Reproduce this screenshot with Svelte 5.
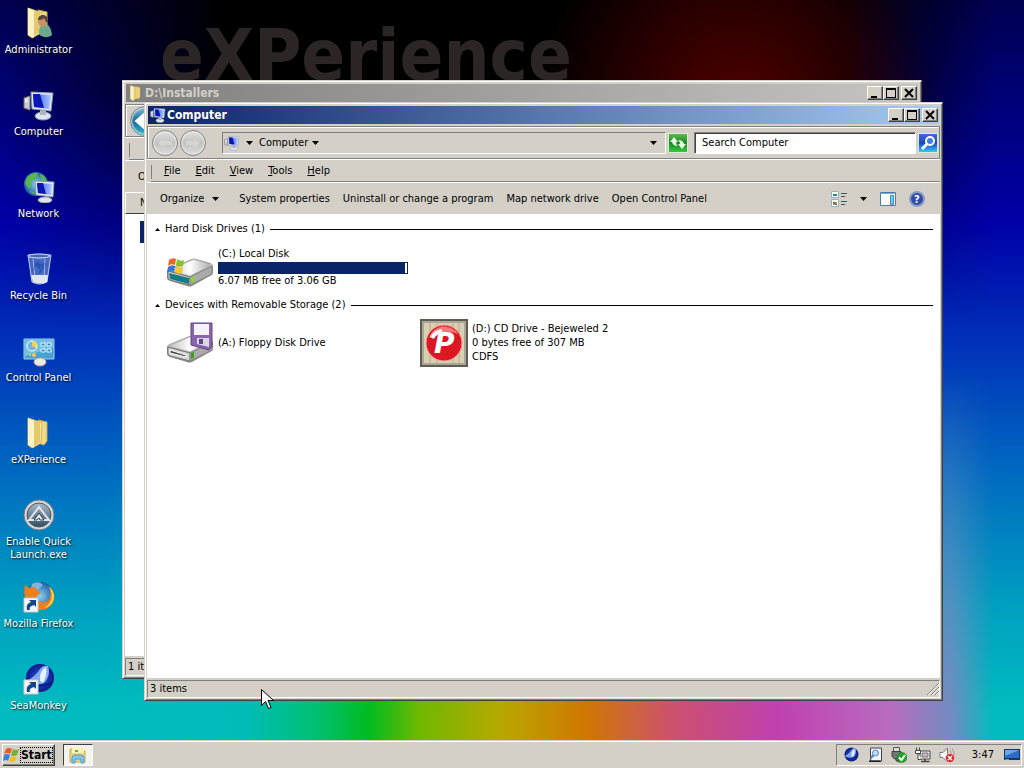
<script>
  const shortcuts = [
    { name: "Administrator", icon: "user" },
    { name: "Computer", icon: "computer" },
    { name: "Network", icon: "network" },
    { name: "Recycle Bin", icon: "bin" },
    { name: "Control Panel", icon: "control" },
    { name: "eXPerience", icon: "folder" },
    { name: "Enable Quick Launch.exe", icon: "autoit" },
    { name: "Mozilla Firefox", icon: "firefox", link: true },
    { name: "SeaMonkey", icon: "seamonkey", link: true },
  ];

  const menus = ["File", "Edit", "View", "Tools", "Help"];

  const commands = [
    "System properties",
    "Uninstall or change a program",
    "Map network drive",
    "Open Control Panel",
  ];

  const groups = [
    {
      title: "Hard Disk Drives (1)",
      drives: [
        {
          name: "(C:) Local Disk",
          icon: "disk",
          used: 99,
          lines: ["6.07 MB free of 3.06 GB"],
        },
      ],
    },
    {
      title: "Devices with Removable Storage (2)",
      drives: [
        { name: "(A:) Floppy Disk Drive", icon: "floppy", lines: [] },
        {
          name: "(D:) CD Drive - Bejeweled 2",
          icon: "game",
          lines: ["0 bytes free of 307 MB", "CDFS"],
        },
      ],
    },
  ];

  const tray = ["seamonkey", "search", "usb", "lan", "sound"];

  let query = $state("");
</script>

{#snippet monitor()}
  <path d="M1 9l6-2v14l-6-2z" fill="#c9cdd2" stroke="#777" />
  <path d="M2 11l3-1M2 13l3-1" stroke="#fff" />
  <ellipse cx="20" cy="27" rx="8" ry="4" fill="#dfe5ea" stroke="#8c97a5" />
  <path d="M17 21h6v5h-6z" fill="#aeb8c4" />
  <path d="M8 3l22 1-2 18-19-2z" fill="#dfe7f0" stroke="#8b98aa" />
  <path d="M10 5l18 1-2 14-15-2z" fill="url(#screen)" />
  <path d="M10 5l7 0 4 14-10-1z" fill="#0a16b4" />
{/snippet}

{#snippet folder()}
  <path d="M15 3l9 2v19l-3 4-6-2z" fill="#f0da83" stroke="#c8a850" />
  <path d="M5 1l6 2 8 3-1 20-9 5-4-3z" fill="#f6e9ac" stroke="#d2b661" />
  <path d="M11 4l6 2v19l-6 4z" fill="#e4c86c" />
  <path d="M5 1l6 3v27l-6-3z" fill="#fbf3c4" />
{/snippet}

{#snippet shortcutArrow()}
  <path d="M1 17h14v14H1z" fill="#f4f7fa" stroke="#c5cbd2" />
  <path d="M4 29c-1-5 1-7 4-8l-2-2h7v7l-2-2c-3 1-5 2-4 5z" fill="#15468c" />
{/snippet}

{#snippet seaGlobe()}
  <circle cx="17" cy="15" r="14" fill="url(#sea)" />
  <path d="M4 18C9 15 14 11 17 6c2-3 5-4 8-3 2 5 1 10-2 15-4 5-14 6-19 0z" fill="#7fa8f0" />
  <path d="M17 18c-1-7 2-12 6-14 1 6 0 11-3 16z" fill="#e6f1ff" />
  <path d="M5 20c5 3 12 4 24 0" stroke="#001f80" fill="none" stroke-width="2" />
{/snippet}

{#snippet icon(name, size)}
  <svg width={size} height={size} viewBox="0 0 32 32" aria-hidden="true">
    {#if name === "computer"}
      {@render monitor()}
    {:else if name === "folder"}
      {@render folder()}
    {:else if name === "user"}
      {@render folder()}
      <path d="M16 27c0-7 2-10 6-10s6 4 7 11c-3 3-10 3-13-1z" fill="#6ba98c" />
      <ellipse cx="20" cy="14" rx="5" ry="6" fill="#c49468" />
      <path d="M15 13c0-6 9-7 10 0v3c-3-1-3-4-4-5-2 2-4 2-6 2z" fill="#5b4532" />
    {:else if name === "network"}
      <circle cx="13" cy="13" r="12" fill="url(#globe)" />
      <path d="M4 6c4-4 8-5 11-4l-2 6-5 2 1 6-4 1-3-5zM17 3c4 1 6 4 7 7l-5 1zM6 20l5 1 1 3z" fill="#59b64c" />
      <path d="M16 27h6v-5h4l-1 6z" fill="#aeb8c4" />
      <ellipse cx="22" cy="29" rx="7" ry="3" fill="#dfe5ea" stroke="#8c97a5" />
      <path d="M12 10l19 1-1 15-17-2z" fill="#dfe7f0" stroke="#8b98aa" />
      <path d="M14 12l15 1-1 11-13-2z" fill="url(#screen)" />
      <path d="M14 12h6l3 11-8-1z" fill="#0a16b4" />
    {:else if name === "bin"}
      <path d="M5 2h23l-4 27q-8 4-15 0z" fill="#6f96d6" fill-opacity="0.65" stroke="#b8cdea" />
      <path d="M8 22h17l-1 7q-7 3-14 0z" fill="#dfe7ec" />
      <path d="M9 18l4-7 4 5M16 20l7-9M14 9l3 4 6-3" fill="none" stroke="#2457b0" stroke-width="2" />
      <ellipse cx="16" cy="3" rx="11" ry="2" fill="#4569b8" stroke="#d7e2f2" />
      <path d="M10 6l2 20M22 6l-1 20" stroke="#dce8f7" stroke-opacity="0.6" />
    {:else if name === "control"}
      <path d="M1 4h30v20H1z" fill="#4aa2d2" stroke="#9bd3ee" />
      <path d="M2 5h28v8L2 21z" fill="#74bfe2" />
      <circle cx="9" cy="11" r="5" fill="#72b5dc" stroke="#fff" />
      <path d="M9 11V6a5 5 0 0 1 4 7z" fill="#ffcf45" />
      <path d="M18 8h4v3h-4zM24 8h4v3h-4zM18 14h4v3h-4zM24 14h4v3h-4z" fill="#348bb8" stroke="#dff6ff" />
      <circle cx="7" cy="20" r="1" fill="#ffc845" /><circle cx="11" cy="20" r="2" fill="#ffc845" />
      <ellipse cx="17" cy="27" rx="6" ry="4" fill="#eee9de" stroke="#b2aba0" />
    {:else if name === "autoit"}
      <circle cx="16" cy="16" r="15" fill="#d6d9dc" stroke="#777e85" />
      <circle cx="16" cy="16" r="12" fill="url(#steel)" stroke="#50585f" />
      <path d="M6 21l10-13 10 13z" fill="none" stroke="#dfe6ed" stroke-width="2" />
      <path d="M11 21l5-7 5 7h-4l-1-2-2 2z" fill="#dfe6ed" stroke="#33404d" />
    {:else if name === "firefox"}
      <circle cx="17" cy="15" r="14" fill="url(#globe)" />
      <path d="M9 3q7-4 11 1l-4 4-3 5-6-3z" fill="#80b2e0" />
      <path d="M2 4l4 3 6-1 2 3 4 3-5 3c0 6 8 8 12 5 4-4 2-10 1-15 7 7 7 17-1 22-8 5-19 1-22-8-2-5-2-10-1-15z" fill="#ee7e1c" />
      <path d="M26 6c5 7 3 17-5 21 5 0 11-6 10-13q-1-6-5-8z" fill="#fdd044" />
    {:else if name === "seamonkey"}
      {@render seaGlobe()}
    {:else if name === "search"}
      <path d="M7 2h22v26H7z" fill="#eef5ff" stroke="#3d4148" stroke-width="2" />
      <path d="M4 27h22l3 3H4z" fill="#222" />
      <circle cx="17" cy="12" r="6" fill="#badcff" stroke="#73869b" stroke-width="2" />
      <path d="M13 16l-6 7" stroke="#5b83b5" stroke-width="4" />
    {:else if name === "usb"}
      <path d="M5 1h12v8H5z" fill="#ddd" stroke="#555" stroke-width="2" />
      <path d="M2 9h18v10l-4 5H7l-5-5z" fill="#757575" stroke="#444" stroke-width="2" />
      <path d="M10 22c0 6 3 7 9 7" fill="none" stroke="#555" stroke-width="4" />
      <circle cx="22" cy="21" r="10" fill="#22a62a" stroke="#087316" />
      <path d="M16 21l5 5 7-10" fill="none" stroke="#fff" stroke-width="4" />
    {:else if name === "lan"}
      <path d="M10 8h20v16H10z" fill="#f4f4f4" stroke="#444" stroke-width="2" />
      <path d="M14 12h12v8H14z" fill="#bbb" stroke="#777" stroke-width="2" />
      <path d="M12 29h17M20 24v5" stroke="#444" stroke-width="3" />
      <path d="M3 1v6M9 1v6M1 7h10v6H1zM6 13v12h7" fill="#fff" stroke="#444" stroke-width="2" />
    {:else if name === "sound"}
      <path d="M2 11h6l9-9v28l-9-9H2z" fill="#f8f8f8" stroke="#777" stroke-width="2" />
      <path d="M22 7q5 6 3 14M26 3q6 8 4 18" fill="none" stroke="#999" stroke-width="2" />
      <circle cx="22" cy="22" r="9" fill="#d8242a" stroke="#fff" />
      <path d="M18 18l8 8m0-8l-8 8" stroke="#fff" stroke-width="3" />
    {/if}
  </svg>
{/snippet}

{#snippet driveBody()}
  <path d="M1 28q0-2 3-3l22-9q2-1 4 0l14 4q3 1 3 4v6q0 2-3 3L26 43q-2 1-5 0L4 38q-3-1-3-3z" fill="#8a8a8a" />
  <path d="M2 27l24-10q2-1 4 0l16 5-22 11z" fill="url(#metal)" stroke="#bbb" />
  <path d="M2 28l22 6v8L4 37q-2-1-2-3z" fill="#d5d7d6" stroke="#777" />
  <path d="M24 34l22-11v8L24 42z" fill="#aaa" stroke="#888" />
  <path d="M25 34l3-1v6l-3 1z" fill="#3f9d22" />
{/snippet}

{#snippet driveIcon(name)}
  <svg class="drive-icon" width="48" height="48" viewBox="0 0 48 48" aria-hidden="true">
    {#if name === "disk"}
      {@render driveBody()}
      <path d="M3 30l20 5v6L4 36z" fill="#177d85" />
      <path d="M25 34l3-1v6l-3 1z" fill="#8fd33a" />
      <path d="M3 17q4-3 7-1l-1 6q-4-2-7 1z" fill="#eb6429" />
      <path d="M11 16q4 3 7 1l-1 6q-4 2-7-1z" fill="#8bbf33" />
      <path d="M2 24q4-3 7-1l-1 6q-4-2-7 1z" fill="#3779d2" />
      <path d="M10 23q4 3 7 1l-1 6q-4 2-7-1z" fill="#f7c52f" />
    {:else if name === "floppy"}
      {@render driveBody()}
      <path d="M4 31l16 5v2L4 34z" fill="#444" stroke="#fff" />
      <path d="M25 4h21v23l-3 4-18-5z" fill="#8966ac" stroke="#62477e" />
      <path d="M28 5h15v11H28z" fill="#f4f4fa" />
      <path d="M31 19h12v9l-12-3z" fill="#ddd6e8" />
      <path d="M33 20h4v5h-4z" fill="#674387" />
    {:else}
      <path d="M0 0h48v48H0z" fill="#5d5d54" />
      <path d="M2 2h44v44H2z" fill="#aaa697" />
      <path d="M4 4h40v40H4z" fill="#d9cfb1" />
      <path d="M10 4v40M17 4v40M33 4v40M39 4v40" stroke="#b9ab8c" />
      <circle cx="24" cy="24" r="18" fill="#da1722" stroke="#f4aaa4" />
      <path d="M9 19a16 16 0 0 1 29-4Q25 9 9 19z" fill="#ff777a" />
      <path d="M12 19q3-6 10-7" stroke="#fff" stroke-width="4" fill="none" />
      <text class="emblem" x="14" y="34">P</text>
    {/if}
  </svg>
{/snippet}

{#snippet arrow()}
  <svg width="7" height="4" viewBox="0 0 7 4" aria-hidden="true"><path d="M0 0h7L3.500 4z" /></svg>
{/snippet}

{#snippet caption(title, picture)}
  <header class="caption">
    {@render icon(picture, 16)}
    <h1>{title}</h1>
    <button class="box" type="button" aria-label="Minimize">
      <svg width="10" height="10"><path d="M1 8h6v2H1z" /></svg>
    </button>
    <button class="box" type="button" aria-label="Maximize">
      <svg width="10" height="10"><path d="M0 0h10v10H0zM1 2v7h8V2z" fill-rule="evenodd" /></svg>
    </button>
    <button class="box close" type="button" aria-label="Close">
      <svg width="10" height="10"><path d="M1 1l8 8M9 1L1 9" stroke="#000" stroke-width="2" /></svg>
    </button>
  </header>
{/snippet}

<svg class="defs" width="0" height="0" aria-hidden="true">
  <defs>
    <linearGradient id="screen"><stop stop-color="#344cff" /><stop offset="1" stop-color="#a8c9ff" /></linearGradient>
    <linearGradient id="metal"><stop stop-color="#bbb" /><stop offset="0.5" stop-color="#fff" /><stop offset="1" stop-color="#aaa" /></linearGradient>
    <linearGradient id="steel" x2="0" y2="1"><stop stop-color="#a9bac7" /><stop offset="1" stop-color="#314e67" /></linearGradient>
    <radialGradient id="globe"><stop stop-color="#8bd2ef" /><stop offset="1" stop-color="#1c5fa8" /></radialGradient>
    <radialGradient id="sea"><stop stop-color="#2458e8" /><stop offset="1" stop-color="#101a88" /></radialGradient>
  </defs>
</svg>

<div class="screen">
  <main class="desktop">
    <div class="glow top" aria-hidden="true"></div>
    <div class="glow bottom" aria-hidden="true"></div>
    <p class="brand">eXPerience</p>

    <nav class="shortcuts">
      {#each shortcuts as item}
        <button class="shortcut" type="button">
          <span class="picture">
            {@render icon(item.icon, 32)}
            {#if item.link}
              <svg class="badge" width="32" height="32" viewBox="0 0 32 32" aria-hidden="true">{@render shortcutArrow()}</svg>
            {/if}
          </span>
          <span>{item.name}</span>
        </button>
      {/each}
    </nav>

    <section class="window back">
      {@render caption("D:\\Installers", "folder")}
      <div class="rebar">
        <button class="nav live" type="button" aria-label="Back">
          <svg width="28" height="28" viewBox="0 0 24 24"><path d="M3 12l9-8v5h9v6h-9v5z" /></svg>
        </button>
      </div>
      <div class="menubar"></div>
      <div class="commands"><button type="button">Organize</button></div>
      <div class="columns">Name</div>
      <div class="listing"><div class="selected"></div></div>
      <footer class="status">1 items</footer>
    </section>

    <section class="window front">
      {@render caption("Computer", "computer")}
      <div class="rebar">
        <button class="nav" type="button" aria-label="Back">
          <svg width="24" height="24" viewBox="0 0 24 24"><path d="M5 12l6-5v3h8v4h-8v3z" /></svg>
        </button>
        <button class="nav" type="button" aria-label="Forward">
          <svg width="24" height="24" viewBox="0 0 24 24"><path d="M19 12l-6-5v3H5v4h8v3z" /></svg>
        </button>
        <div class="address">
          {@render icon("computer", 16)}
          <button type="button" aria-label="Locations">{@render arrow()}</button>
          <button type="button">Computer {@render arrow()}</button>
          <button class="history" type="button" aria-label="Previous locations">{@render arrow()}</button>
        </div>
        <button class="tool refresh" type="button" aria-label="Refresh">
          <svg width="18" height="18" viewBox="0 0 18 18">
            <path d="M1 8l4-5 4 5H7q0 3 2 4-5 0-6-4zM17 10l-4 5-4-5h2q0-3-2-4 5 0 6 4z" fill="#e8ffe4" />
          </svg>
        </button>
        <input type="search" aria-label="Search" placeholder="Search Computer" bind:value={query} />
        <button class="tool find" type="button" aria-label="Search">
          <svg width="18" height="18" viewBox="0 0 18 18">
            <circle cx="11" cy="7" r="4" fill="#427ae8" stroke="#fff" stroke-width="2" />
            <path d="M8 10l-5 5" stroke="#fff" stroke-width="3" />
          </svg>
        </button>
      </div>
      <div class="menubar">
        {#each menus as menu}
          <button type="button"><u>{menu[0]}</u>{menu.slice(1)}</button>
        {/each}
      </div>
      <div class="commands">
        <button class="organize" type="button">Organize {@render arrow()}</button>
        {#each commands as command}
          <button type="button">{command}</button>
        {/each}
        <div class="views">
          <button type="button" aria-label="Views">
            <svg width="16" height="16" viewBox="0 0 16 16">
              <path d="M.5.5h7v6h-7zM.5 8.500h7v7h-7z" fill="#fff" stroke="#8bb4c6" />
              <path d="M2 3h4v2H2z" fill="#268c65" /><path d="M2 11h4v3H2z" fill="#b29b30" />
              <path d="M2 11l4 3M10 2.500h6M10 5.500h4M10 10.500h6M10 13.500h4" stroke="#405160" />
            </svg>
          </button>
          <button type="button" aria-label="More views">{@render arrow()}</button>
          <button type="button" aria-label="Preview pane">
            <svg width="16" height="14" viewBox="0 0 16 14">
              <path d="M.5.5h15v13H.5z" fill="#fff" stroke="#4d7da3" />
              <path d="M1 1h14v1H1z" fill="#75add5" /><path d="M10.500 3.500h3v9h-3z" fill="#79c8f0" stroke="#3793c4" />
            </svg>
          </button>
          <button type="button" aria-label="Help">
            <svg width="16" height="16" viewBox="0 0 16 16">
              <circle cx="8" cy="8" r="7" fill="#304da5" stroke="#8b9cc9" stroke-width="2" />
              <text class="question" x="5" y="12">?</text>
            </svg>
          </button>
        </div>
      </div>

      <div class="content">
        {#each groups as group}
          <h2>
            <svg width="5" height="3" viewBox="0 0 5 3" aria-hidden="true"><path d="M0 3h5L2.500 0z" /></svg>
            {group.title}
          </h2>
          <ul>
            {#each group.drives as drive}
              <li>
                {@render driveIcon(drive.icon)}
                <div class="details">
                  <div>{drive.name}</div>
                  {#if drive.used}
                    <div class="usage"><div style="width: {drive.used}%"></div></div>
                  {/if}
                  {#each drive.lines as line}
                    <div>{line}</div>
                  {/each}
                </div>
              </li>
            {/each}
          </ul>
        {/each}
      </div>
      <footer class="status">
        3 items
        <svg width="12" height="12" viewBox="0 0 12 12" aria-hidden="true">
          <path d="M0 12L12 0M4 12l8-8M8 12l4-4" stroke="#808080" />
          <path d="M1 12L12 1M5 12l7-7M9 12l3-3" stroke="#fff" />
        </svg>
      </footer>
    </section>
  </main>

  <footer class="taskbar">
    <button class="start" type="button">
      <svg width="18" height="16" viewBox="0 0 18 16" aria-hidden="true">
        <path d="M3 2q3-2 6 0L7 7Q4 5 1 7z" fill="#e85b27" />
        <path d="M10 2q3 2 6 0l-2 6q-3 2-6 0z" fill="#72b22e" />
        <path d="M1 8q3-2 6 0l-2 6q-2-2-5 0z" fill="#3684da" />
        <path d="M8 9q3 2 6 0l-2 5q-3 2-6 0z" fill="#f6bd24" />
      </svg>
      <span>Start</span>
    </button>
    <button class="task" type="button" aria-label="Windows Explorer">
      <svg width="18" height="18" viewBox="0 0 18 18" aria-hidden="true">
        <path d="M1 3h6l1 2h8v11H1z" fill="#ead579" stroke="#c7ae55" />
        <path d="M3 2h12v5H3z" fill="#fff3b4" /><path d="M6 4h3v2H6z" fill="#6da84e" />
        <path d="M3 17v-5q0-3 3-3h6q3 0 3 3v5h-3v-4H6v4z" fill="#89c6e8" stroke="#559bc4" />
      </svg>
    </button>
    <div class="tray">
      {#each tray as name}
        {@render icon(name, 16)}
      {/each}
      <time>3:47</time>
      <svg width="16" height="14" viewBox="0 0 16 14" aria-hidden="true">
        <path d="M0 1h16v11H0z" fill="#183569" /><path d="M1 2h14v8H1z" fill="#2d6dc8" />
        <path d="M1 2h14L1 8z" fill="#69a8e8" /><path d="M1 11h4v1H1z" fill="#62b83d" />
      </svg>
    </div>
  </footer>

  <svg class="cursor" width="13" height="21" viewBox="0 0 13 21" aria-hidden="true">
    <path d="M.5.5v16l4-4 3 7 2.500-1-3-7h5.500z" fill="#fff" stroke="#000" />
  </svg>
</div>

<style>
  :global(body) {
    margin: 0;
  }

  .screen {
    --face: #d4d0c8;
    --shadow: #808080;
    --dark: #404040;
    --navy: #0a246a;
    position: relative;
    height: 100vh;
    display: flex;
    flex-direction: column;
    overflow: hidden;
    font: 11px/14px "DejaVu Sans Condensed", "DejaVu Sans", sans-serif;
    color: #000;
  }

  button {
    padding: 0;
    border: 0;
    background: none;
    font: inherit;
    color: inherit;
    white-space: nowrap;
  }

  svg {
    display: block;
    flex: none;
  }

  h1,
  h2,
  p,
  ul {
    margin: 0;
    padding: 0;
  }

  .defs {
    position: absolute;
  }

  .desktop {
    position: relative;
    flex: 1;
    overflow: hidden;
    background: linear-gradient(#000050, #00007c 15%, #0000a8 30%, #0030b8 46%, #0064c0 62%, #00a0c0 82%, #00bcc0 96%);
  }

  .glow {
    position: absolute;
    inset: 0;
  }

  .glow.top {
    background:
      radial-gradient(ellipse 20% 34% at 72% 18%, #580000, transparent),
      linear-gradient(90deg, transparent 0, #000 22%, #000 82%, transparent 97%);
    mask-image: linear-gradient(#000 12%, transparent 44%);
  }

  .glow.bottom {
    background: linear-gradient(90deg, transparent 10%, #00bcb8 24%, #00c070 31%, #00bc20 36%, #70b800 41%, #b8a800 49%, #d07800 57%, #cc5070 66%, #c040b0 76%, #b86cc0 87%, #708cc0 93%, transparent 97%);
    mask-image: linear-gradient(transparent 50%, #000 96%);
  }

  .brand {
    position: absolute;
    top: 14px;
    left: 160px;
    font-size: 72px;
    line-height: 82px;
    font-weight: bold;
    color: #2b2625;
  }

  .shortcuts {
    position: relative;
    width: 77px;
  }

  .shortcut {
    width: 100%;
    height: 82px;
    padding-top: 7px;
    display: flex;
    flex-direction: column;
    align-items: center;
    gap: 4px;
    line-height: 13px;
    color: #fff;
    text-shadow: 1px 1px 2px #000;
    white-space: normal;
  }

  .picture {
    position: relative;
  }

  .badge {
    position: absolute;
    inset: 0;
  }

  .window {
    position: absolute;
    box-sizing: border-box;
    display: flex;
    flex-direction: column;
    padding: 2px;
    background: var(--face);
    border: 1px solid;
    border-color: var(--face) var(--dark) var(--dark) var(--face);
    box-shadow: inset 1px 1px #fff, inset -1px -1px var(--shadow);
  }

  .window.back {
    inset: 80px 102px 61px 122px;
  }

  .window.front {
    inset: 102px 81px 39px 144px;
  }

  .caption {
    height: 18px;
    margin: 1px 1px 2px;
    padding: 0 1px 0 2px;
    display: flex;
    align-items: center;
    color: #fff;
    background: linear-gradient(90deg, var(--navy), #a6caf0);
  }

  .back .caption {
    color: var(--face);
    background: linear-gradient(90deg, var(--shadow), #c8c4c0);
  }

  .caption h1 {
    flex: 1;
    padding-left: 1px;
    font-size: 12px;
  }

  .box {
    width: 16px;
    height: 14px;
    padding: 1px 2px;
    background: var(--face);
    border: 1px solid;
    border-color: #fff var(--dark) var(--dark) #fff;
    box-shadow: inset -1px -1px var(--shadow);
  }

  .close {
    margin-left: 2px;
  }

  .rebar {
    height: 33px;
    box-sizing: border-box;
    padding: 0 1px 0 4px;
    display: flex;
    align-items: center;
    border: 1px solid var(--shadow);
    box-shadow: inset 1px 1px #fff, 0 1px #fff;
  }

  .nav {
    width: 26px;
    height: 26px;
    margin-right: 2px;
    border: 1px solid #858585;
    border-radius: 50%;
    background: linear-gradient(#e0e0de, #c2c2c0 50%, #ddd);
    box-shadow: inset 0 0 2px 1px #eee;
  }

  .nav path {
    fill: #d4d4d2;
  }

  .nav.live {
    flex: none;
    width: 30px;
    height: 30px;
    background: linear-gradient(#86c1d8, #146a94 50%, #2bb9dc);
  }

  .nav.live path {
    fill: #fff;
  }

  .address {
    flex: 1;
    height: 20px;
    margin: 0 2px 0 14px;
    padding: 0 8px 0 1px;
    display: flex;
    align-items: center;
    gap: 6px;
    border: 1px solid;
    border-color: var(--shadow) #fff #fff var(--shadow);
  }

  .address button {
    display: flex;
    align-items: center;
    gap: 4px;
  }

  .address .history {
    margin-left: auto;
  }

  .tool {
    width: 20px;
    height: 20px;
    border: 1px solid #d8eed4;
  }

  .refresh {
    background: linear-gradient(#60b84d, #168a25 50%, #37c83c);
  }

  .find {
    margin-left: 2px;
    background: linear-gradient(#4468d8, #1c45c8 50%, #30c8f4);
  }

  input {
    width: 222px;
    height: 22px;
    box-sizing: border-box;
    margin-left: 6px;
    padding: 0 7px;
    font: inherit;
    background: #fff;
    border: 1px solid;
    border-color: var(--shadow) #fff #fff var(--shadow);
    box-shadow: inset 1px 1px var(--dark);
    border-radius: 0;
    appearance: none;
  }

  input::placeholder {
    color: #000;
    opacity: 1;
  }

  .menubar {
    height: 20px;
    margin: 2px 0 0 4px;
    padding-left: 13px;
    display: flex;
    align-items: center;
    gap: 15px;
    border-bottom: 1px solid var(--shadow);
    background: linear-gradient(var(--shadow), var(--shadow)) 0 4px / 1px 14px no-repeat;
  }

  .commands {
    height: 31px;
    padding: 0 15px 0 13px;
    display: flex;
    align-items: center;
    gap: 13px;
    border-top: 1px solid #fff;
  }

  .organize {
    display: flex;
    align-items: center;
    gap: 8px;
    margin-right: 7px;
  }

  .views {
    flex: 1;
    display: flex;
    align-items: center;
    justify-content: flex-end;
    gap: 13px;
  }

  .question {
    font-size: 11px;
    font-weight: bold;
    fill: #fff;
  }

  .emblem {
    font: italic bold 28px "DejaVu Sans", sans-serif;
    fill: #fff;
  }

  .content,
  .listing {
    flex: 1;
    min-height: 0;
    background: #fff;
  }

  .content {
    padding: 8px 7px 0 8px;
  }

  h2 {
    display: flex;
    align-items: center;
    gap: 5px;
    font-size: 11px;
    font-weight: normal;
  }

  h2::after {
    content: "";
    flex: 1;
    height: 1px;
    background: #000;
  }

  ul {
    display: grid;
    grid-template-columns: repeat(auto-fill, 254px);
    padding: 7px 0 7px 11px;
    list-style: none;
  }

  li {
    display: flex;
    align-items: center;
    gap: 4px;
  }

  .usage {
    width: 188px;
    height: 10px;
    margin-top: 1px;
    border: 1px solid var(--navy);
  }

  .usage div {
    height: 100%;
    background: var(--navy);
  }

  .status {
    height: 16px;
    margin-top: 2px;
    padding-left: 2px;
    display: flex;
    align-items: center;
    justify-content: space-between;
    border: 1px solid;
    border-color: var(--shadow) #fff #fff var(--shadow);
  }

  .columns {
    height: 20px;
    padding-left: 14px;
    line-height: 20px;
    border: 1px solid;
    border-color: #fff var(--dark) var(--dark) #fff;
  }

  .selected {
    height: 22px;
    margin: 7px 15px;
    background: var(--navy);
  }

  .taskbar {
    height: 24px;
    padding: 1px 2px 2px;
    display: flex;
    gap: 8px;
    background: var(--face);
    border-top: 1px solid var(--face);
    box-shadow: inset 0 1px #fff;
  }

  .start,
  .task {
    display: flex;
    align-items: center;
    margin-top: 2px;
    border: 1px solid;
    border-color: #fff var(--dark) var(--dark) #fff;
    box-shadow: inset -1px -1px var(--shadow);
  }

  .start {
    padding: 0 2px 0 0;
    font-size: 12px;
    font-weight: bold;
  }

  .start span {
    outline: 1px dotted #000;
  }

  .task {
    padding: 0 5px;
    background: #f4f2ee;
    border-color: var(--dark) #fff #fff var(--dark);
    box-shadow: none;
  }

  .tray {
    margin: 2px 0 0 auto;
    padding: 0 1px 0 6px;
    display: flex;
    align-items: center;
    gap: 8px;
    border: 1px solid;
    border-color: var(--shadow) #fff #fff var(--shadow);
  }

  time {
    margin: 0 2px 0 9px;
  }

  .cursor {
    position: absolute;
    left: 261px;
    top: 689px;
  }
</style>
